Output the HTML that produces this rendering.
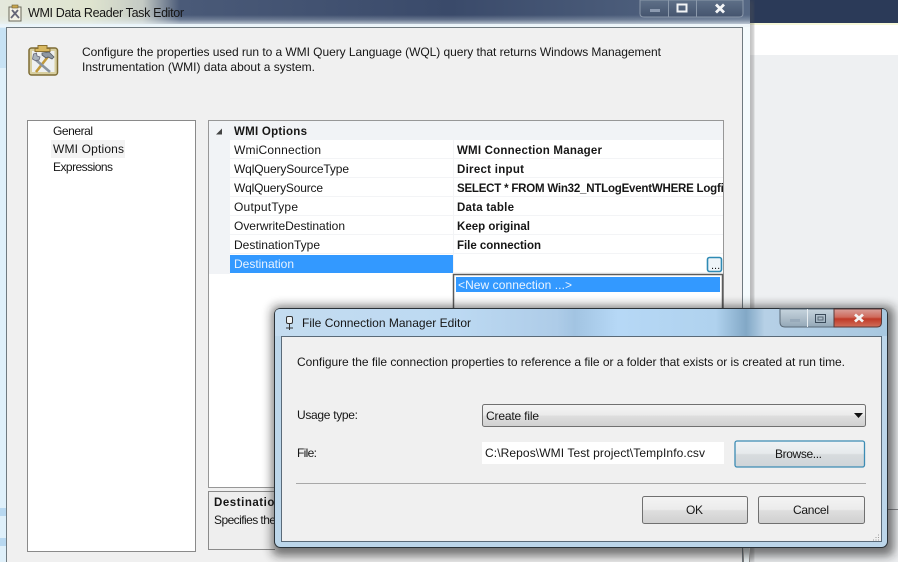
<!DOCTYPE html>
<html><head><meta charset="utf-8"><style>
html,body{margin:0;padding:0;background:#eef0f2;width:898px;height:562px;overflow:hidden}
svg{display:block;position:absolute;left:0;top:0}
text{font-family:"Liberation Sans",sans-serif;font-size:12px;fill:#161616}
.b{font-weight:bold;font-size:11.5px}
.t{font-size:12.5px}
</style></head><body>
<svg width="898" height="562" viewBox="0 0 898 562" xmlns="http://www.w3.org/2000/svg">
<defs>
<linearGradient id="title" x1="0" x2="1" y1="0" y2="0">
<stop offset="0" stop-color="#e4e8dc"/><stop offset=".12" stop-color="#dfe4cf"/><stop offset=".19" stop-color="#c4cac4"/><stop offset=".24" stop-color="#4a5a78"/><stop offset=".6" stop-color="#3a4a6a"/><stop offset="1" stop-color="#566884"/>
</linearGradient>
<linearGradient id="fade" x1="0" x2="0" y1="0" y2="1">
<stop offset="0" stop-color="#e6f1f7" stop-opacity="0"/><stop offset=".4" stop-color="#e6f1f7" stop-opacity=".25"/><stop offset="1" stop-color="#eef6fa" stop-opacity="1"/>
</linearGradient>
<linearGradient id="side" x1="0" x2="1" y1="0" y2="0">
<stop offset="0" stop-color="#dff0fa"/><stop offset="1" stop-color="#f4fbfd"/>
</linearGradient>
<linearGradient id="dtitle" x1="0" x2="1" y1="0" y2="0">
<stop offset="0" stop-color="#c4dcf0"/><stop offset=".3" stop-color="#bcd9f2"/><stop offset=".46" stop-color="#aecce8"/><stop offset=".49" stop-color="#a2c4e2"/><stop offset=".56" stop-color="#b6d8f6"/><stop offset=".72" stop-color="#b0d2ee"/><stop offset=".77" stop-color="#82a8c6"/><stop offset=".8" stop-color="#b6d0e6"/><stop offset="1" stop-color="#a8c8e0"/>
</linearGradient>
<linearGradient id="btn" x1="0" x2="0" y1="0" y2="1">
<stop offset="0" stop-color="#f4f4f4"/><stop offset=".48" stop-color="#ebebeb"/><stop offset=".52" stop-color="#dedede"/><stop offset="1" stop-color="#d0d0d0"/>
</linearGradient>
<linearGradient id="btnf" x1="0" x2="0" y1="0" y2="1">
<stop offset="0" stop-color="#f0f3f5"/><stop offset=".48" stop-color="#e6eaec"/><stop offset=".52" stop-color="#d8dcde"/><stop offset="1" stop-color="#ced4d8"/>
</linearGradient>
<linearGradient id="close" x1="0" x2="0" y1="0" y2="1">
<stop offset="0" stop-color="#d9a09a"/><stop offset=".45" stop-color="#cf6a5c"/><stop offset=".55" stop-color="#c03a28"/><stop offset="1" stop-color="#d0705c"/>
</linearGradient>
<linearGradient id="cap" x1="0" x2="0" y1="0" y2="1">
<stop offset="0" stop-color="#c6d4de"/><stop offset=".5" stop-color="#aebeca"/><stop offset="1" stop-color="#94a8b8"/>
</linearGradient>
<linearGradient id="ocap" x1="0" x2="0" y1="0" y2="1">
<stop offset="0" stop-color="#5f7088"/><stop offset="1" stop-color="#44546e"/>
</linearGradient>
<filter id="sh" x="-5%" y="-5%" width="110%" height="112%"><feGaussianBlur stdDeviation="5"/></filter>
<filter id="sh2" x="-5%" y="-5%" width="110%" height="110%"><feGaussianBlur stdDeviation="3"/></filter>
<clipPath id="val"><rect x="454" y="178" width="269" height="19"/></clipPath>
</defs>

<!-- background -->
<rect width="898" height="562" fill="#eef0f2"/>
<rect x="748" y="0" width="150" height="23" fill="#2b3a58"/>
<rect x="748" y="23" width="150" height="2" fill="#f6f7d8"/>
<rect x="748" y="25" width="150" height="30" fill="#fff"/>
<rect x="880" y="509" width="18" height="1" fill="#8a8c90"/>

<!-- outer window -->
<rect x="746" y="0" width="8" height="562" fill="#555" opacity=".4" filter="url(#sh2)"/>
<rect x="0" y="0" width="750" height="562" fill="url(#side)"/>
<rect x="0" y="0" width="750" height="24" fill="url(#title)"/>
<rect x="0" y="15" width="750" height="12" fill="url(#fade)"/>
<rect x="0" y="28" width="6" height="40" fill="#b8d8f0" opacity=".6"/>
<rect x="0" y="508" width="6" height="8" fill="#b8d8f0"/>
<rect x="0" y="538" width="6" height="8" fill="#b8d8f0"/>
<rect x="6.500" y="27.500" width="736" height="540" fill="#f0f0f0" stroke="#6f7a80"/>
<text x="28" y="17" class="t" textLength="156">WMI Data Reader Task Editor</text>

<!-- title icon -->
<rect x="9" y="7" width="12" height="14" fill="#f4f2e6" stroke="#6a6a5c"/>
<rect x="12" y="5" width="6" height="3" fill="#c8a850" stroke="#6a5a30" stroke-width=".6"/>
<path d="M11 18L18 10M12 10L19 18" stroke="#667" stroke-width="1.800"/>

<!-- caption buttons -->
<path d="M640 0V13.500Q640 17 644 17H739Q743 17 743 13.500V0Z" fill="url(#ocap)" stroke="#8a98aa"/>
<path d="M668.500 0V17M696.500 0V17" stroke="#8a98aa"/>
<rect x="650" y="9" width="10" height="3" fill="#8c9ab0"/>
<rect x="677.500" y="4.500" width="9" height="7" fill="none" stroke="#f2f4f6" stroke-width="2"/>
<path d="M716 4.500L724 12.500M724 4.500L716 12.500" stroke="#f4f6f8" stroke-width="2.800"/>

<!-- header icon -->
<g>
<rect x="29" y="48" width="28.500" height="27" rx="2.500" fill="#d8cfa0" stroke="#7d6c34" stroke-width="1.500"/>
<rect x="32" y="51" width="22.500" height="21" fill="#eef0f0"/>
<path d="M38 45.500h9v3h3v3H35v-3h3z" fill="#d8b860" stroke="#8a7030"/>
<path d="M36 72L50 54" stroke="#c29a3a" stroke-width="2.600"/>
<path d="M36 60L50 72" stroke="#8a949e" stroke-width="2.600"/>
<path d="M32.500 59l1-5 3-1 .5 3 3 1-1 3-4 .5z" fill="#aab4be" stroke="#667" stroke-width=".8"/>
<path d="M42 53l7-1 5 5-2 2-4-2-2 1-4-3z" fill="#8f98a2" stroke="#555c64" stroke-width=".8"/>
</g>
<text x="82" y="56" textLength="579">Configure the properties used run to a WMI Query Language (WQL) query that returns Windows Management</text>
<text x="82" y="71" textLength="233">Instrumentation (WMI) data about a system.</text>

<!-- left list -->
<rect x="27.500" y="120.500" width="168" height="431" fill="#fff" stroke="#8a8a8a"/>
<rect x="51" y="140" width="74" height="18" fill="#f3f3f3"/>
<text x="53" y="135" textLength="40">General</text>
<text x="53" y="153" textLength="71">WMI Options</text>
<text x="53" y="171" textLength="60">Expressions</text>

<!-- property grid -->
<rect x="208.500" y="120.500" width="515" height="367" fill="#fff" stroke="#979797"/>
<rect x="209" y="121" width="514" height="19" fill="#f1f3f6"/>
<rect x="209" y="140" width="21" height="134" fill="#f1f3f6"/>
<path d="M216 134.500h6v-6z" fill="#444"/>
<text x="234" y="135" class="b" textLength="73">WMI Options</text>
<path d="M230 158.500H723M230 177.500H723M230 196.500H723M230 215.500H723M230 234.500H723M230 253.500H723M230 272.500H723" stroke="#f3f4f6"/>
<path d="M453.500 140V273" stroke="#f3f4f6"/>
<text x="234" y="154" textLength="87">WmiConnection</text>
<text x="234" y="173" textLength="115">WqlQuerySourceType</text>
<text x="234" y="192" textLength="89">WqlQuerySource</text>
<text x="234" y="211" textLength="64">OutputType</text>
<text x="234" y="230" textLength="111">OverwriteDestination</text>
<text x="234" y="249" textLength="86">DestinationType</text>
<rect x="230" y="255" width="223" height="18" fill="#3399ff"/>
<text x="234" y="268" textLength="60" style="fill:#e8f2ff">Destination</text>
<text x="457" y="154" class="b" textLength="145">WMI Connection Manager</text>
<text x="457" y="173" class="b" textLength="67">Direct input</text>
<g clip-path="url(#val)"><text x="457" y="192" class="b" textLength="276">SELECT * FROM Win32_NTLogEventWHERE Logfile</text></g>
<text x="457" y="211" class="b" textLength="57">Data table</text>
<text x="457" y="230" class="b" textLength="73">Keep original</text>
<text x="457" y="249" class="b" textLength="84">File connection</text>
<rect x="707.500" y="257.500" width="14" height="14" rx="2" fill="#eef4f8" stroke="#2f8ab4" stroke-width="1.600"/>
<text x="711" y="269" style="font-size:11px">...</text>

<!-- dropdown -->
<rect x="453.500" y="274.500" width="269" height="50" fill="#fff" stroke="#5c5c5c" stroke-width="1.500"/>
<rect x="456" y="277" width="264" height="15" fill="#3399ff"/>
<text x="458" y="289" textLength="114" style="fill:#eaf4ff">&lt;New connection ...&gt;</text>

<!-- help box -->
<path d="M275 491.500H208.500V549.500H275" fill="#eeeeee" stroke="#8a8a8a"/>
<text x="214" y="506" class="b" textLength="68">Destination</text>
<text x="214" y="524" textLength="62">Specifies the</text>

<!-- dialog shadow -->
<rect x="272" y="306" width="622" height="250" rx="6" fill="#1a1a1a" opacity=".6" filter="url(#sh)"/>
<!-- dialog -->
<rect x="274.500" y="308.500" width="613" height="239" rx="6" fill="#bcd6ea" stroke="#2a3238"/>
<path d="M275 336V314Q275 309 280 309H882Q887 309 887 314V336Z" fill="url(#dtitle)"/>
<rect x="281.500" y="336.500" width="600" height="205" fill="#f0f0f0" stroke="#5a6a78"/>
<text x="302" y="327" textLength="169">File Connection Manager Editor</text>
<g fill="none" stroke="#333" stroke-width="1">
<rect x="286.500" y="316.500" width="6" height="7" rx="1.500" fill="#eef2f4"/>
<path d="M289.500 324V330M286 328H293"/>
</g>

<!-- dialog caption buttons -->
<path d="M780 309V322Q780 327 785 327H834V309Z" fill="url(#cap)" stroke="#5a6a78"/>
<path d="M807.500 309V327" stroke="#e8eef2"/>
<path d="M834 309V327H877Q881.500 327 881.500 322V309Z" fill="url(#close)" stroke="#5a3a38"/>
<rect x="790" y="319" width="10" height="3" fill="#98aaba"/>
<rect x="815.500" y="314.500" width="10" height="8" fill="none" stroke="#3a4a5a"/>
<rect x="818" y="317" width="5" height="3" fill="none" stroke="#5a6a78"/>
<path d="M855 314.500L863 321.500M863 314.500L855 321.500" stroke="#f4f4f4" stroke-width="2.800"/>

<!-- dialog content -->
<text x="297" y="366" textLength="548">Configure the file connection properties to reference a file or a folder that exists or is created at run time.</text>
<text x="297" y="419" textLength="61">Usage type:</text>
<rect x="482.500" y="404.500" width="383" height="22" rx="2" fill="url(#btn)" stroke="#707070"/>
<text x="486" y="420" textLength="53">Create file</text>
<path d="M854 413h9l-4.500 5z" fill="#111"/>
<text x="297" y="457" textLength="20">File:</text>
<rect x="482" y="442" width="242" height="22" fill="#fff"/>
<text x="485" y="457" textLength="220">C:\Repos\WMI Test project\TempInfo.csv</text>
<rect x="735" y="441" width="129.500" height="26" rx="2" fill="url(#btnf)" stroke="#3c8cb4" stroke-width="1.300"/>
<text x="775" y="458" textLength="47">Browse...</text>
<rect x="296" y="483" width="570" height="1" fill="#a8a8a8"/>
<rect x="642.500" y="496.500" width="105" height="27" rx="2" fill="url(#btn)" stroke="#707070"/>
<text x="686" y="514" textLength="17">OK</text>
<rect x="758.500" y="496.500" width="106" height="27" rx="2" fill="url(#btn)" stroke="#707070"/>
<text x="793" y="514" textLength="36">Cancel</text>
<path d="M878.500 534.500v1M878.500 537v1M878.500 539.500v1M876 537v1M876 539.500v1M873.500 539.500v1" stroke="#9a9a9a"/>

<!-- lines showing through -->
<rect x="743" y="548" width="1" height="14" fill="#777"/>
<rect x="749" y="548" width="1" height="14" fill="#888"/>
</svg>
</body></html>
